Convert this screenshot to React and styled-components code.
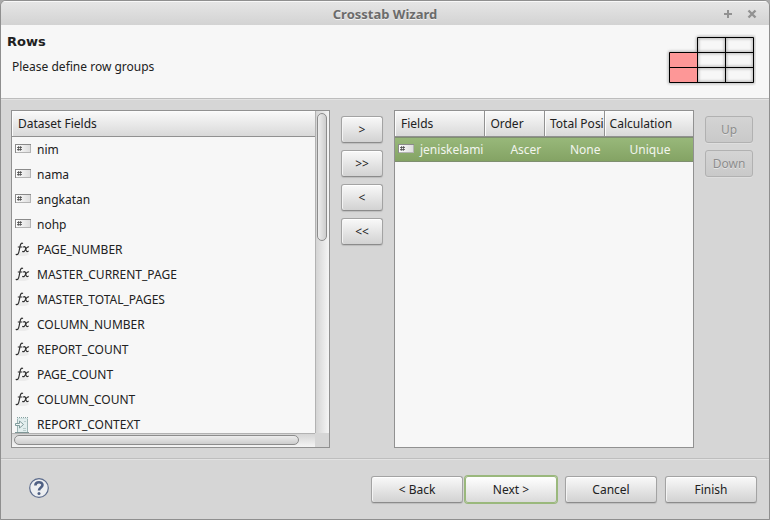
import React from "react";
import styled, { createGlobalStyle, css } from "styled-components";

const Global = createGlobalStyle`
  * { box-sizing: border-box; }
  html, body { margin: 0; background: #a9a9a9; }
  body, button, table {
    font-family: "Noto Sans", "Open Sans", sans-serif;
    font-size: 12px;
    line-height: 16px;
    color: #212121;
  }
`;

const Window = styled.div`
  height: 100vh;
  display: flex;
  flex-direction: column;
  background: #d6d6d6;
  border: 1px solid #8f8f8f;
  border-radius: 6px 6px 0 0;
  overflow: hidden;
`;

const TitleBar = styled.header`
  flex: none;
  height: 24px;
  display: grid;
  grid-template-columns: 1fr auto 1fr;
  align-items: center;
  padding: 2px 11px 0;
  background: linear-gradient(#e6e6e6, #d3d3d3);
  box-shadow: inset 0 1px #f8f8f8;
`;

const WindowTitle = styled.h1`
  grid-column: 2;
  margin: 0;
  font-size: 13px;
  line-height: 16px;
  font-weight: 700;
  color: #6b6b6b;
  text-shadow: 0 1px #f0f0f0;
`;

const WindowControls = styled.div`
  display: flex;
  justify-content: flex-end;
  gap: 12px;
`;

const ControlButton = styled.button`
  width: 12px;
  height: 12px;
  padding: 0;
  border: 0;
  background: none;
  color: #929292;
  svg { display: block; }
`;

const Banner = styled.section`
  flex: none;
  height: 74px;
  display: flex;
  justify-content: space-between;
  padding: 9px 13px 0 6px;
  background: #f7f7f7;
  border-bottom: 1px solid #bdbdbd;
`;

const PageTitle = styled.h2`
  margin: 0;
  font-family: "DejaVu Sans", sans-serif;
  font-size: 13px;
  line-height: 16px;
  font-weight: 700;
`;

const Description = styled.p`
  margin: 9px 0 0 5px;
`;

const Content = styled.main`
  flex: 1;
  min-height: 0;
  display: grid;
  grid-template-columns: 319fr 42px 300fr 48px;
  grid-template-rows: minmax(0, 1fr);
  column-gap: 11px;
  padding: 10px 16px 10px 10px;
  border-top: 1px solid #e3e3e3;
  border-bottom: 1px solid #bebebe;
`;

const Panel = styled.div`
  min-width: 0;
  display: grid;
  grid-template-columns: minmax(0, 1fr) auto;
  grid-template-rows: minmax(0, 1fr) auto;
  background: #f7f7f7;
  border: 1px solid #919191;
`;

const Viewport = styled.div`
  overflow: hidden;
`;

const Table = styled.table`
  width: 100%;
  table-layout: fixed;
  border-collapse: separate;
  border-spacing: 0;
`;

const HeadCell = styled.th`
  height: 26px;
  padding: 1px 0 0 6px;
  text-align: left;
  font-weight: 400;
  white-space: nowrap;
  overflow: hidden;
  background: linear-gradient(#fafafa, #d9d9d9);
  border-bottom: 1px solid #919191;
  box-shadow: inset 1px 1px #fcfcfc;
  & + & { border-left: 1px solid #919191; padding-left: 5px; }
`;

const Cell = styled.td`
  height: 25px;
  padding: 0 0 0 ${(p) => (p.$inset ? "26px" : "3px")};
  white-space: nowrap;
  overflow: hidden;
`;

const CellContent = styled.span`
  display: flex;
  align-items: center;
  gap: 6px;
  svg { flex: none; }
`;

const SelectedRow = styled.tr`
  color: #f2f5ee;
  td {
    background: linear-gradient(#98b87a, #84a364);
    border-top: 1px solid #7f8f70;
    border-bottom: 1px solid #7f8f70;
  }
`;

const Track = styled.div`
  padding: 1px;
  ${(p) =>
    p.$vertical
      ? css`
          width: 14px;
          padding-top: 2px;
          border-left: 1px solid #b2b2b2;
          background: linear-gradient(90deg, #d4d4d4, #f5f5f5);
        `
      : css`
          height: 14px;
          padding-left: 2px;
          border-top: 1px solid #b2b2b2;
          background: linear-gradient(#d4d4d4, #f5f5f5);
        `}
`;

const Thumb = styled.div`
  border: 1px solid #8c8c8c;
  border-radius: 5px;
  ${(p) =>
    p.$vertical
      ? css`
          width: 10px;
          height: 40%;
          background: linear-gradient(90deg, #ededed, #cdcdcd);
        `
      : css`
          height: 10px;
          width: 95%;
          background: linear-gradient(#ededed, #cdcdcd);
        `}
`;

const Corner = styled.div`
  background: #d6d6d6;
`;

const ButtonStack = styled.div`
  display: flex;
  flex-direction: column;
  gap: 7px;
  padding-top: 6px;
`;

const Button = styled.button`
  flex: none;
  height: 27px;
  padding: 1px 0 0;
  text-align: center;
  border: 1px solid #a3a3a3;
  border-bottom-color: #8b8b8b;
  border-radius: 3px;
  background: linear-gradient(#f9f9f9, #d2d2d2);
  box-shadow: inset 0 1px #ffffff, inset 1px 0 #f4f4f4, 0 1px 1px #bdbdbd;

  &:disabled {
    color: #8d8d8d;
    border-color: #b1b1b1;
    background: linear-gradient(#d4d4d4, #c9c9c9);
    box-shadow: 0 1px #dedede;
    text-shadow: 0 1px #e4e4e4;
  }
`;

const ActionButton = styled(Button)`
  width: 92px;
  ${(p) =>
    p.$primary &&
    css`
      border-color: #9ab87c;
      background: linear-gradient(#ffffff, #dadada);
      box-shadow: 0 0 0 1px #9ab87c;
    `}
`;

const Footer = styled.footer`
  flex: none;
  height: 60px;
  display: flex;
  align-items: flex-start;
  justify-content: space-between;
  padding: 16px 12px 0 28px;
  border-top: 1px solid #e3e3e3;
`;

const HelpButton = styled.button`
  width: 20px;
  height: 24px;
  padding: 2px 0;
  border: 0;
  background: none;
  svg { display: block; }
`;

const Actions = styled.div`
  display: flex;
  gap: 8px;
`;

const StepButtons = styled.div`
  display: flex;
  gap: 2px;
`;

const FieldIcon = () => (
  <svg width="16" height="16" viewBox="0 0 16 16" aria-hidden="true">
    <defs>
      <linearGradient id="field" x1="0" x2="1">
        <stop offset="0" stopColor="#fff" />
        <stop offset="1" stopColor="#dcdcdc" />
      </linearGradient>
    </defs>
    <rect x="0.5" y="2.5" width="15" height="8" fill="url(#field)" stroke="#b4b4b4" />
    <path d="M0 2.5H16M0.5 2V11" stroke="#8a8a8a" />
    <path d="M3.7 4L3.2 9M5.7 4L5.2 9M2 5.5H7M2 7.5H7" stroke="#4c4c4c" strokeWidth="0.8" />
  </svg>
);

const FunctionIcon = () => (
  <svg width="16" height="16" viewBox="0 0 16 16" aria-hidden="true">
    <ellipse cx="7" cy="12" rx="7" ry="2" fill="#ececec" />
    <path
      d="M0.8 12.2C2.6 13.4 3.6 11.6 4.1 9L5.2 3.6C5.7 1.4 6.6 0.7 8 1.6M2.8 5H7.4"
      fill="none"
      stroke="#2e2e2e"
      strokeWidth="1.2"
    />
    <path
      d="M8.2 5.2C10.4 3.7 10.5 6 10.9 7.5C11.4 9.9 12 10.2 13.6 8.9M14 5C12 4 11.2 6.3 10.2 8C9.3 9.7 8.5 10.2 7.3 9.2"
      fill="none"
      stroke="#2e2e2e"
      strokeWidth="1.2"
    />
  </svg>
);

const ContextIcon = () => (
  <svg width="16" height="16" viewBox="0 0 16 16" aria-hidden="true">
    <path d="M2.5 1V15.5H12.5V1" fill="#e2eeee" stroke="#9db5b5" />
    <path d="M2 0.5H13" stroke="#84a0a0" strokeDasharray="1 1" />
    <path d="M2 1.5H13" stroke="#cfdfdf" />
    <path d="M0 15.5H14" stroke="#7f9696" />
    <path d="M8 11.5H11M8 13.5H11M9 4.5H11" stroke="#b9cccc" />
    <path d="M0.5 6.5H4.5V4L8.5 7.5L4.5 11V8.5H0.5Z" fill="#f2f7f7" stroke="#7f9b9b" />
  </svg>
);

const CrosstabIcon = () => (
  <svg width="90" height="52" viewBox="0 0 90 52" aria-hidden="true">
    <defs>
      <filter id="soft" x="-10%" y="-10%" width="120%" height="120%">
        <feGaussianBlur stdDeviation="1.5" />
      </filter>
    </defs>
    <path
      d="M31.5 3.5H87.5V48.5H3.5V18.5H87.5M3.5 33.5H87.5M31.5 3.5V48.5M59.5 3.5V48.5"
      fill="none"
      stroke="#999"
      strokeWidth="2"
      filter="url(#soft)"
    />
    <rect x="3" y="18" width="28" height="30" fill="#fd9797" />
    <path
      d="M31.5 3.5H87.5V48.5H3.5V18.5H87.5M3.5 33.5H87.5M31.5 3.5V48.5M59.5 3.5V48.5"
      fill="none"
      stroke="#000"
    />
  </svg>
);

const HelpIcon = () => (
  <svg width="20" height="20" viewBox="0 0 20 20" aria-hidden="true">
    <circle cx="10" cy="10" r="9.3" fill="#eceef1" stroke="#5b6b8c" strokeWidth="1.2" />
    <path
      d="M6.4 7.4C6.4 3.1 13.5 3.3 13.5 7C13.5 9.5 10 9.4 10 12.6"
      fill="none"
      stroke="#4f6084"
      strokeWidth="2.6"
    />
    <circle cx="10" cy="15.4" r="1.5" fill="#4f6084" />
  </svg>
);

const icons = { field: FieldIcon, fx: FunctionIcon, context: ContextIcon };

const datasetFields = [
  ["field", "nim"],
  ["field", "nama"],
  ["field", "angkatan"],
  ["field", "nohp"],
  ["fx", "PAGE_NUMBER"],
  ["fx", "MASTER_CURRENT_PAGE"],
  ["fx", "MASTER_TOTAL_PAGES"],
  ["fx", "COLUMN_NUMBER"],
  ["fx", "REPORT_COUNT"],
  ["fx", "PAGE_COUNT"],
  ["fx", "COLUMN_COUNT"],
  ["context", "REPORT_CONTEXT"],
];

export default function App() {
  return (
    <Window>
      <Global />
      <TitleBar>
        <WindowTitle>Crosstab Wizard</WindowTitle>
        <WindowControls>
          <ControlButton aria-label="Maximize">
            <svg width="12" height="12" viewBox="0 0 12 12">
              <path d="M6 2V10M2 6H10" stroke="currentColor" strokeWidth="2" />
            </svg>
          </ControlButton>
          <ControlButton aria-label="Close">
            <svg width="12" height="12" viewBox="0 0 12 12">
              <path d="M2.5 2.5L9.5 9.5M9.5 2.5L2.5 9.5" stroke="currentColor" strokeWidth="2.4" />
            </svg>
          </ControlButton>
        </WindowControls>
      </TitleBar>

      <Banner>
        <div>
          <PageTitle>Rows</PageTitle>
          <Description>Please define row groups</Description>
        </div>
        <CrosstabIcon />
      </Banner>

      <Content>
        <Panel>
          <Viewport>
            <Table>
              <thead>
                <tr>
                  <HeadCell>Dataset Fields</HeadCell>
                </tr>
              </thead>
              <tbody>
                {datasetFields.map(([kind, name]) => {
                  const Icon = icons[kind];
                  return (
                    <tr key={name}>
                      <Cell>
                        <CellContent>
                          <Icon />
                          {name}
                        </CellContent>
                      </Cell>
                    </tr>
                  );
                })}
              </tbody>
            </Table>
          </Viewport>
          <Track $vertical>
            <Thumb $vertical />
          </Track>
          <Track>
            <Thumb />
          </Track>
          <Corner />
        </Panel>

        <ButtonStack>
          <Button>&gt;</Button>
          <Button>&gt;&gt;</Button>
          <Button>&lt;</Button>
          <Button>&lt;&lt;</Button>
        </ButtonStack>

        <Panel>
          <Viewport>
            <Table>
              <colgroup>
                <col width="30%" />
                <col width="20%" />
                <col width="20%" />
                <col width="30%" />
              </colgroup>
              <thead>
                <tr>
                  <HeadCell>Fields</HeadCell>
                  <HeadCell>Order</HeadCell>
                  <HeadCell>Total Posi</HeadCell>
                  <HeadCell>Calculation</HeadCell>
                </tr>
              </thead>
              <tbody>
                <SelectedRow>
                  <Cell>
                    <CellContent>
                      <FieldIcon />
                      jeniskelami
                    </CellContent>
                  </Cell>
                  <Cell $inset>Ascer</Cell>
                  <Cell $inset>None</Cell>
                  <Cell $inset>Unique</Cell>
                </SelectedRow>
              </tbody>
            </Table>
          </Viewport>
        </Panel>

        <ButtonStack>
          <Button disabled>Up</Button>
          <Button disabled>Down</Button>
        </ButtonStack>
      </Content>

      <Footer>
        <HelpButton aria-label="Help">
          <HelpIcon />
        </HelpButton>
        <Actions>
          <StepButtons>
            <ActionButton>&lt; Back</ActionButton>
            <ActionButton $primary>Next &gt;</ActionButton>
          </StepButtons>
          <ActionButton>Cancel</ActionButton>
          <ActionButton>Finish</ActionButton>
        </Actions>
      </Footer>
    </Window>
  );
}
